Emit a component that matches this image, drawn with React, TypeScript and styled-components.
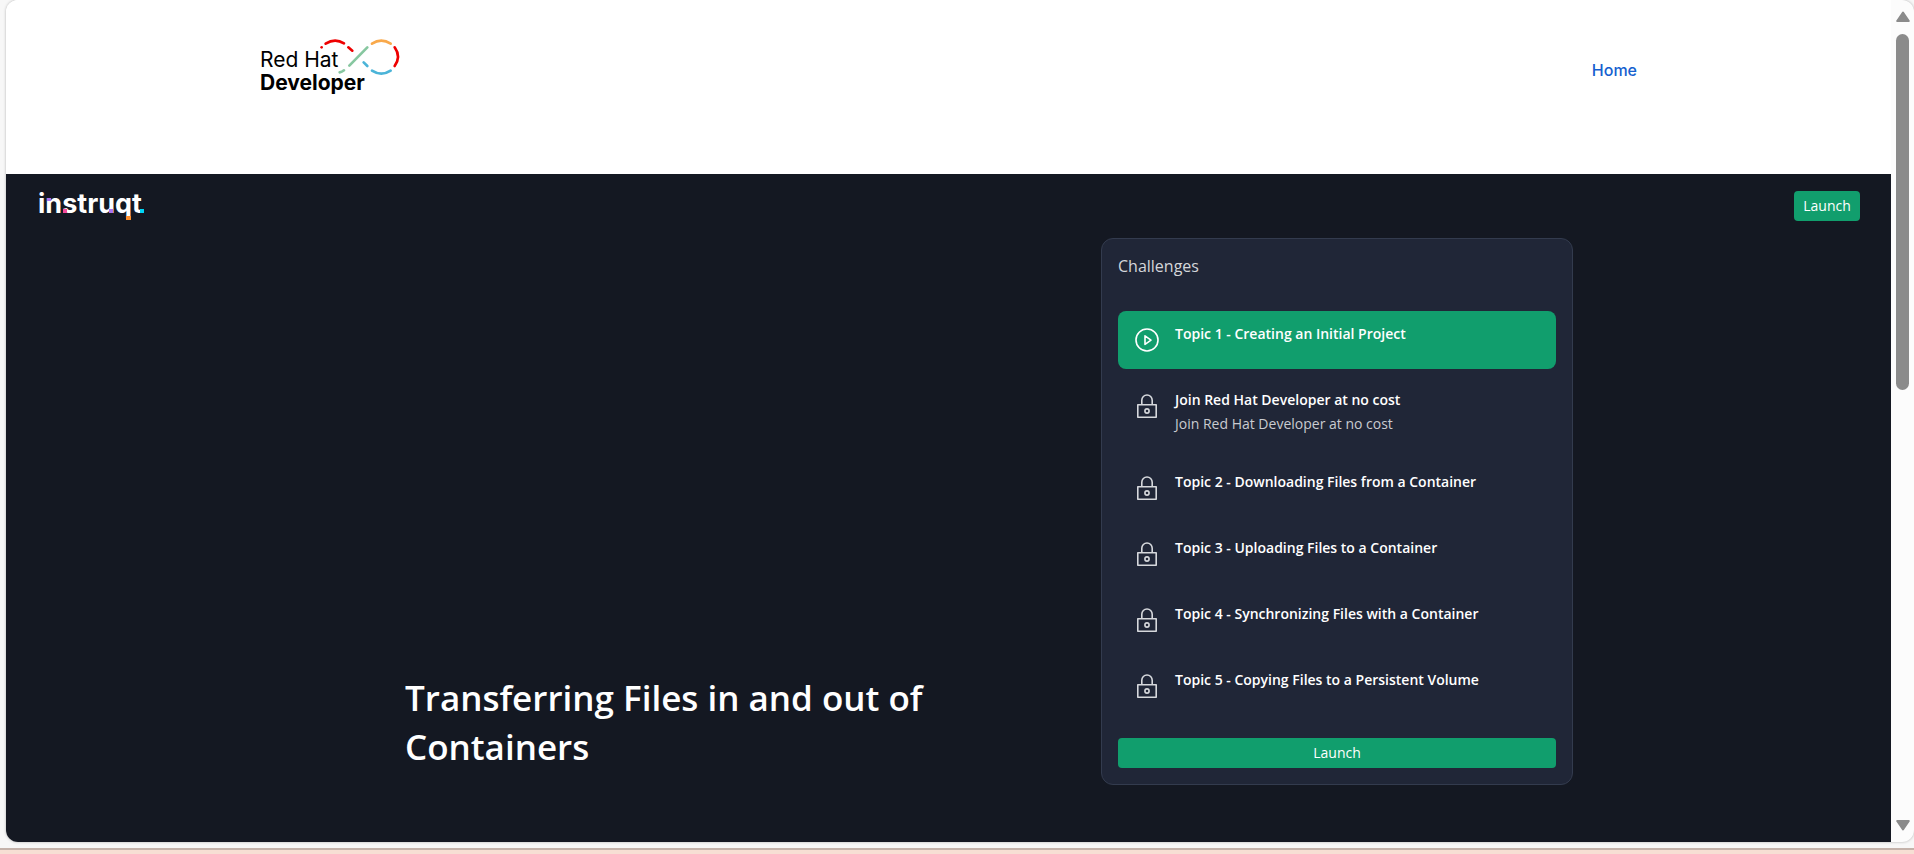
import React from "react";
import styled, { createGlobalStyle } from "styled-components";

const GlobalStyle = createGlobalStyle`
  *, *::before, *::after { box-sizing: border-box; }
  body {
    margin: 0;
    background: #f7f7f7;
    font-family: "Open Sans", "Liberation Sans", sans-serif;
  }
  h1, h2, h3, p, ol { margin: 0; padding: 0; }
`;

const Shell = styled.div`
  display: flex;
  flex-direction: column;
  min-height: 100vh;
`;

const Stage = styled.div`
  flex: 1;
  display: flex;
  padding: 0 0 6px 6px;
`;

const Sheet = styled.div`
  flex: 1;
  display: flex;
  overflow: hidden;
  border-radius: 12px;
  background: #fcfcfc;
  box-shadow: 0 0 3px rgba(0, 0, 0, 0.28);
`;

const Page = styled.div`
  flex: 1;
  display: flex;
  flex-direction: column;
`;

const BottomStrip = styled.div`
  height: 6px;
  border-top: 2px solid #c4b2aa;
  background: #f7dfd4;
`;

const SiteHeader = styled.header`
  background: #fff;
  padding: 30px 32px 64px;
`;

const HeaderInner = styled.div`
  display: flex;
  align-items: center;
  justify-content: space-between;
  max-width: 1377px;
  margin: 0 auto;
`;

const LogoLink = styled.a`
  display: block;
  svg { display: block; overflow: visible; }
`;

const NavLink = styled.a`
  font: 500 16px/24px Inter, sans-serif;
  color: #1560cf;
  text-decoration: none;
`;

const Track = styled.main`
  flex: 1;
  background: #141822;
  padding-bottom: 57px;
`;

const TrackBar = styled.div`
  display: flex;
  align-items: center;
  justify-content: space-between;
  height: 64px;
  padding: 0 31px;
`;

const LaunchButton = styled.button<{ $wide?: boolean }>`
  display: block;
  width: ${(p) => (p.$wide ? "100%" : "66px")};
  height: 30px;
  padding: 0;
  border: 0;
  border-radius: 4px;
  background: #119e6d;
  color: #fff;
  font: 400 14px/20px "Open Sans", sans-serif;
  cursor: pointer;
`;

const TrackInner = styled.div`
  display: grid;
  grid-template-columns: 1fr 472px;
  align-items: end;
  max-width: 1249px;
  margin: 0 auto;
  padding-left: 81px;
`;

const TrackTitle = styled.h1`
  max-width: 600px;
  padding-bottom: 14px;
  color: #fff;
  font-size: 35px;
  font-weight: 600;
  line-height: 49px;
`;

const Card = styled.section`
  padding: 16px;
  border: 1px solid #333b4e;
  border-radius: 12px;
  background: #202637;
`;

const CardTitle = styled.h2`
  margin-bottom: 34px;
  color: #d4d6da;
  font-size: 16px;
  font-weight: 400;
  line-height: 22px;
`;

const ChallengeList = styled.ol`
  display: flex;
  flex-direction: column;
  gap: 8px;
  margin-bottom: 23px;
  list-style: none;
`;

const Challenge = styled.li<{ $active?: boolean }>`
  display: flex;
  gap: 16px;
  padding: 12px 17px 17px;
  border-radius: 8px;
  background: ${(p) => (p.$active ? "#119e6d" : "transparent")};
`;

const IconSlot = styled.span`
  padding-top: 5px;
  svg { display: block; }
`;

const ChallengeText = styled.div`
  display: flex;
  flex-direction: column;
  gap: 2px;
`;

const ChallengeTitle = styled.h3`
  color: #fff;
  font-size: 14px;
  font-weight: 600;
  line-height: 22px;
`;

const ChallengeNote = styled.p`
  color: #c9cbd0;
  font-size: 14px;
  line-height: 21px;
`;

const ScrollRail = styled.div`
  display: flex;
  flex-direction: column;
  align-items: center;
  width: 23px;
  padding: 11px 0;
  svg { display: block; }
`;

const ScrollThumb = styled.div`
  flex: 0 0 43.4%;
  width: 13px;
  margin: 11px 0 auto;
  border-radius: 7px;
  background: #8b8b8b;
`;

const RedHatLogo = () => (
  <svg width="142" height="80" viewBox="0 0 142 80" role="img" aria-label="Red Hat Developer">
    <text x="0" y="37" fontFamily="Inter, sans-serif" fontSize="21" fill="#000">Red Hat</text>
    <text x="0" y="60" fontFamily="Inter, sans-serif" fontSize="21" fontWeight="700" fill="#000">Developer</text>
    <g transform="translate(-20 -10) scale(0.3333)" fill="none" strokeWidth="8" strokeLinecap="round">
      <path d="M245 82v.1" stroke="#e00" />
      <path d="M257 71Q285 53 312 70" stroke="#e00" />
      <path d="M325 82L337 92" stroke="#e00" />
      <path d="M328 137L382 82" stroke="#87c7a0" />
      <path d="M299 157Q306 156 312 151" stroke="#87c7a0" />
      <path d="M396 71Q424 53 452 71" stroke="#f9a94b" />
      <path d="M464 82Q484 110 464 138" stroke="#e00" />
      <path d="M396 152Q424 170 452 152" stroke="#4bb4d8" />
      <path d="M371 127L382 138" stroke="#4bb4d8" />
    </g>
  </svg>
);

const InstruqtLogo = () => (
  <svg width="112" height="34" viewBox="0 0 112 34" role="img" aria-label="instruqt">
    <text x="1" y="24" fontFamily="Inter, sans-serif" fontSize="27" fontWeight="700" fill="#fff">instruqt</text>
    <rect x="10" y="9" width="4" height="3" fill="#a974f0" />
    <rect x="26" y="20" width="4" height="4" fill="#f64a9c" />
    <rect x="72" y="20" width="4" height="4" fill="#a974f0" />
    <rect x="89" y="27" width="5" height="4" fill="#ff8f2b" />
    <rect x="103" y="20" width="4" height="4" fill="#00d5f5" />
  </svg>
);

const PlayIcon = () => (
  <svg width="24" height="24" viewBox="0 0 24 24" fill="none" stroke="#fff" strokeWidth="1.6" strokeLinejoin="round" aria-hidden="true">
    <circle cx="12" cy="12" r="11" />
    <path d="M10 7.8v8.6l6-4.3z" />
  </svg>
);

const LockIcon = () => (
  <svg width="24" height="24" viewBox="0 0 24 24" fill="none" stroke="#d6d8dc" strokeWidth="1.6" strokeLinejoin="round" aria-hidden="true">
    <rect x="2.8" y="10.8" width="18.4" height="12.4" />
    <path d="M6.8 10.8V6.2a5.2 5.2 0 0 1 10.4 0v4.6" />
    <circle cx="12" cy="17" r="2.1" />
  </svg>
);

const Arrow = ({ down }: { down?: boolean }) => (
  <svg width="14" height="12" viewBox="0 0 14 12" fill="#8b8b8b" stroke="#8b8b8b" strokeWidth="2" strokeLinejoin="round" aria-hidden="true">
    <path d={down ? "M1.2 2h11.6L7 10.5z" : "M1.2 10h11.6L7 1.5z"} />
  </svg>
);

const challenges: { title: string; note?: string; active?: boolean }[] = [
  { title: "Topic 1 - Creating an Initial Project", active: true },
  { title: "Join Red Hat Developer at no cost", note: "Join Red Hat Developer at no cost" },
  { title: "Topic 2 - Downloading Files from a Container" },
  { title: "Topic 3 - Uploading Files to a Container" },
  { title: "Topic 4 - Synchronizing Files with a Container" },
  { title: "Topic 5 - Copying Files to a Persistent Volume" },
];

export default function App() {
  return (
    <Shell>
      <GlobalStyle />
      <Stage>
        <Sheet>
          <Page>
            <SiteHeader>
              <HeaderInner>
                <LogoLink href="#"><RedHatLogo /></LogoLink>
                <NavLink href="#">Home</NavLink>
              </HeaderInner>
            </SiteHeader>
            <Track>
              <TrackBar>
                <LogoLink href="#"><InstruqtLogo /></LogoLink>
                <LaunchButton type="button">Launch</LaunchButton>
              </TrackBar>
              <TrackInner>
                <TrackTitle>Transferring Files in and out of Containers</TrackTitle>
                <Card>
                  <CardTitle>Challenges</CardTitle>
                  <ChallengeList>
                    {challenges.map((c) => (
                      <Challenge key={c.title} $active={c.active}>
                        <IconSlot>{c.active ? <PlayIcon /> : <LockIcon />}</IconSlot>
                        <ChallengeText>
                          <ChallengeTitle>{c.title}</ChallengeTitle>
                          {c.note && <ChallengeNote>{c.note}</ChallengeNote>}
                        </ChallengeText>
                      </Challenge>
                    ))}
                  </ChallengeList>
                  <LaunchButton type="button" $wide>Launch</LaunchButton>
                </Card>
              </TrackInner>
            </Track>
          </Page>
          <ScrollRail>
            <Arrow />
            <ScrollThumb />
            <Arrow down />
          </ScrollRail>
        </Sheet>
      </Stage>
      <BottomStrip />
    </Shell>
  );
}
